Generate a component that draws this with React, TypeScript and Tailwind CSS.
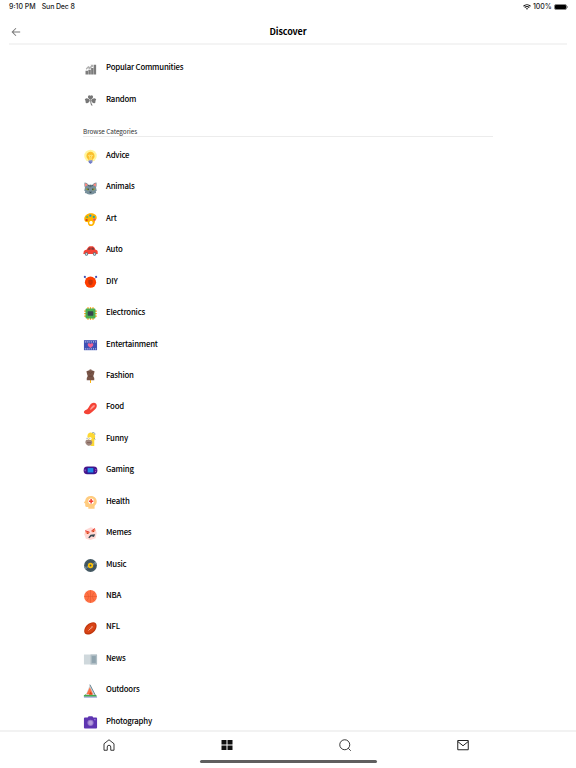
import type { ReactNode } from 'react';
import { FcIdea, FcElectronics } from 'react-icons/fc';

interface Item {
  label: string;
  icon: ReactNode;
}

function Svg({ children }: { children: ReactNode }) {
  return (
    <svg viewBox="0 0 48 48" className="w-[15px] h-[15px]" fill="none">
      {children}
    </svg>
  );
}

const shortcuts: Item[] = [
  {
    label: 'Popular Communities',
    icon: (
      <Svg>
        <g fill="#7c7c7c">
          <path d="M8 28h8v12H8zM17 25h8v15h-8zM26 19h7v21h-7zM34 9h8v31h-8z" />
          <path d="M9 21l8-8 5 3 4-5-2-2h8v8l-2-2-8 8-6-3-5 5z" opacity=".6" />
        </g>
      </Svg>
    ),
  },
  {
    label: 'Random',
    icon: (
      <Svg>
        <g fill="#777777">
          <path d="M24 22c-8-4-10-9-7-13 2-3 5-2 7 0 2-2 5-3 7 0 3 4 1 9-7 13z" />
          <path d="M22 23c-3 9-8 11-12 9-3-2-2-5-1-7-3-1-4-4-2-6 4-4 10-2 15 4z" />
          <path d="M26 23c3 9 8 11 12 9 3-2 2-5 1-7 3-1 4-4 2-6-4-4-10-2-15 4z" />
          <path d="M23 22h3c0 8 1 12 5 17l-3 2c-4-5-5-11-5-19z" />
        </g>
      </Svg>
    ),
  },
];

const categories: Item[] = [
  { label: 'Advice', icon: <FcIdea className="w-[15px] h-[15px]" /> },
  {
    label: 'Animals',
    icon: (
      <Svg>
        <path d="M5 5c6 0 11 4 13 9L7 23C4 17 4 10 5 5zM43 5c-6 0-11 4-13 9l11 9c3-6 3-13 2-18z" fill="#78909c" />
        <path d="M7 7c4 1 7 3 9 7l-8 5c-2-4-2-8-1-12zM41 7c-4 1-7 3-9 7l8 5c2-4 2-8 1-12z" fill="#ff8a80" />
        <path d="M6 22c2-7 9-10 18-10s16 3 18 10l2 9-3 2 1 5-6 2c-2 2-6 3-12 3s-10-1-12-3l-6-2 1-5-3-2z" fill="#78909c" />
        <path d="M17 12h3l1 7-5-5zM31 12h-3l-1 7 5-5zM23 12h2v8h-2z" fill="#455a64" />
        <path d="M9 24c4-1 9 1 11 5-5 2-10 0-11-5zM39 24c-4-1-9 1-11 5 5 2 10 0 11-5z" fill="#9ea82c" />
        <path d="M15 24h3v5h-3zM30 24h3v5h-3z" fill="#263238" />
        <path d="M19 34h10l-5 5z" fill="#37474f" />
      </Svg>
    ),
  },
  {
    label: 'Art',
    icon: (
      <Svg>
        <path
          d="M25 4C13 4 4 12 4 22c0 6 4 10 8 10 3 0 4 1 4 4 0 6 4 9 9 9 9 0 13-9 13-15 0-4 6-5 6-12C44 9 36 4 25 4zm1 36c-3 0-6-2-6-5.500s3-5.500 6-5.500 5 2 5 5.500-2 5.500-5 5.500z"
          fill="#ffb300"
        />
        <rect x="8" y="22" width="7" height="7" rx="3" fill="#d84315" />
        <rect x="10" y="13" width="7" height="7" rx="3" fill="#7cb342" />
        <rect x="20" y="8" width="7" height="7" rx="3" fill="#039be5" />
        <rect x="31" y="12" width="7" height="7" rx="3" fill="#26a69a" />
        <rect x="33" y="21" width="7" height="7" rx="3" fill="#ec407a" />
      </Svg>
    ),
  },
  {
    label: 'Auto',
    icon: (
      <Svg>
        <path d="M2 26c0-5 4-7 9-8l5-7c2-3 4-4 8-4h5c4 0 6 2 8 5l3 6c5 1 7 3 7 7v7H1z" fill="#f44336" />
        <path d="M18 13c1-2 3-2 6-2v7H14zM27 11c4 0 6 0 7 2l3 5H27z" fill="#7f3b3b" />
        <circle cx="11" cy="32" r="5.500" fill="#546e7a" />
        <circle cx="37" cy="32" r="5.500" fill="#546e7a" />
        <circle cx="11" cy="32" r="3" fill="#cfd8dc" />
        <circle cx="37" cy="32" r="3" fill="#cfd8dc" />
      </Svg>
    ),
  },
  {
    label: 'DIY',
    icon: (
      <Svg>
        <path d="M8 9l6 6M40 9l-6 6" stroke="#90a4ae" strokeWidth="3" />
        <circle cx="6" cy="6" r="3.500" fill="#3f51b5" />
        <circle cx="42" cy="6" r="3.500" fill="#3f51b5" />
        <circle cx="24" cy="23" r="18" fill="#ff3d00" />
        <path d="M17 17l7-3 7 3v6c0 5-3 8-7 10-4-2-7-5-7-10z" fill="#bf360c" />
        <path d="M22 20h6v7h-6z" fill="#dd2c00" />
      </Svg>
    ),
  },
  { label: 'Electronics', icon: <FcElectronics className="w-[15px] h-[15px]" /> },
  {
    label: 'Entertainment',
    icon: (
      <Svg>
        <path d="M3 7h42v32H3z" fill="#3f51b5" />
        <path
          d="M6 10h3v4H6zM12 10h3v4h-3zM18 10h3v4h-3zM25 10h3v4h-3zM32 10h3v4h-3zM39 10h3v4h-3zM6 33h3v4H6zM12 33h3v4h-3zM18 33h3v4h-3zM25 33h3v4h-3zM32 33h3v4h-3zM39 33h3v4h-3z"
          fill="#c5cae9"
        />
        <path d="M24 32c-6-4-9-7-9-11 0-5 7-6 9-2 2-4 9-3 9 2 0 4-3 7-9 11z" fill="#f06292" />
      </Svg>
    ),
  },
  {
    label: 'Fashion',
    icon: (
      <Svg>
        <path d="M22.500 33h3v12h-3z" fill="#ffb300" />
        <path d="M21 1h6v5h-6z" fill="#8d6e63" />
        <path d="M20 4h8l9 3-2 10c-3 5-2 7 1 12v7H12v-7c3-5 4-7 1-12L11 7z" fill="#795548" />
        <path d="M16 8l8 6 8-6M17 23h14" stroke="#5d4037" strokeWidth="2" />
      </Svg>
    ),
  },
  {
    label: 'Food',
    icon: (
      <Svg>
        <path d="M27 8c8-6 19-1 17 9-1 8-8 12-14 17-7 7-15 10-23 7-7-3-4-10 2-12 9-3 10-15 18-21z" fill="#f44336" />
        <path d="M31 14c5-3 9 0 7 4-2 3-6 4-8 7-4 4-6 5-8 4 2-6 4-11 9-15z" fill="#ff7a70" />
        <path d="M35 15l-10 10" stroke="#ffd5d0" strokeWidth="2" />
      </Svg>
    ),
  },
  {
    label: 'Funny',
    icon: (
      <Svg>
        <path d="M14 15C14 5 20 1 27 2c8 0 12 6 12 14l-3 13v16H24V32L13 24z" fill="#fdd835" />
        <path d="M29 3c6-4 10 1 9 6M36 20l3 4" stroke="#607d8b" strokeWidth="2.200" />
        <path d="M8 30c1-5 7-7 13-5 8 1 10 5 8 12-2 6-10 9-15 5-4-3-8-7-6-12z" fill="#a1887f" />
        <circle cx="14" cy="21" r="4.500" fill="#eceff1" />
        <circle cx="23" cy="21" r="4.500" fill="#fff" />
        <circle cx="13" cy="21" r="1.400" fill="#37474f" />
        <circle cx="22" cy="21" r="1.400" fill="#37474f" />
        <path d="M13 34h12" stroke="#6d4c41" strokeWidth="2" />
      </Svg>
    ),
  },
  {
    label: 'Gaming',
    icon: (
      <Svg>
        <path d="M14 8h20c9 0 12 5 12 13s-4 12-11 12H13C6 33 2 29 2 21S5 8 14 8z" fill="#4a148c" />
        <rect x="12" y="10" width="24" height="22" rx="2" fill="#311b92" />
        <path d="M15 13h18v14H15z" fill="#1e88e5" />
        <path d="M7 17v7M4 20h6" stroke="#9575cd" strokeWidth="1.800" />
        <circle cx="41" cy="18" r="1.800" fill="#ba68c8" />
        <circle cx="40" cy="24" r="1.800" fill="#ba68c8" />
      </Svg>
    ),
  },
  {
    label: 'Health',
    icon: (
      <Svg>
        <path d="M25 3c12 0 19 8 19 18 0 7-4 11-7 14v9H17v-6h-5c-4 0-5-2-5-6v-5l-4-2 4-7C8 9 15 3 25 3z" fill="#ffcc80" />
        <circle cx="26" cy="20" r="9" fill="#fff" />
        <path d="M23.500 13h5v4.500H33v5h-4.500V27h-5v-4.500H19v-5h4.500z" fill="#f44336" />
      </Svg>
    ),
  },
  {
    label: 'Memes',
    icon: (
      <Svg>
        <path d="M8 12L25 4l15 5 4 13-4 17-16 6-15-4-5-15z" fill="#ffd9d5" />
        <path d="M8 16l13 3-3 6-9-1zM27 15l11-6 2 7-9 5z" fill="#ff8a65" />
        <path d="M7 15l14 5M27 16l11-8" stroke="#e53935" strokeWidth="3" />
        <circle cx="15" cy="23" r="2.500" fill="#bf360c" />
        <circle cx="33" cy="17" r="2.500" fill="#bf360c" />
        <path d="M17 37l7-9 15-2-4 9-8-2-7 6z" fill="#37474f" />
      </Svg>
    ),
  },
  {
    label: 'Music',
    icon: (
      <Svg>
        <circle cx="24" cy="24" r="20.500" fill="#455a64" />
        <path d="M24 24L8 37A20 20 0 0 1 4 29zM24 24L40 11a20 20 0 0 1 4 8z" fill="#78909c" />
        <circle cx="24" cy="24" r="14" stroke="#37474f" strokeWidth="1.500" />
        <circle cx="24" cy="24" r="8.500" fill="#ffc107" />
        <circle cx="24" cy="24" r="3" fill="#455a64" />
      </Svg>
    ),
  },
  {
    label: 'NBA',
    icon: (
      <Svg>
        <circle cx="24" cy="24" r="20.500" fill="#ff7043" />
        <path
          d="M24 4v40M4 24h40M10 9c10 8 10 22 0 30M38 9c-10 8-10 22 0 30"
          stroke="#e2582f"
          strokeWidth="1.800"
        />
      </Svg>
    ),
  },
  {
    label: 'NFL',
    icon: (
      <Svg>
        <path d="M40 6c6 6 4 19-5 28S13 46 7 41 4 22 13 13 35 2 40 6z" fill="#bf360c" />
        <path d="M38 9c4 5 2 15-5 22S14 41 9 37 8 23 15 16 33 5 38 9z" fill="#d84315" />
        <path d="M17 31l14-14M19 25l4 4M23 21l4 4M27 17l4 4" stroke="#ffccbc" strokeWidth="1.800" />
      </Svg>
    ),
  },
  {
    label: 'News',
    icon: (
      <Svg>
        <path d="M3 8h42v32H3z" fill="#cfd8dc" />
        <path d="M24 8h21v32H24z" fill="#b0bec5" />
        <path d="M28 13h13v22H28z" fill="#90a4ae" />
      </Svg>
    ),
  },
  {
    label: 'Outdoors',
    icon: (
      <Svg>
        <path d="M3 36l9-5 12 2 18 2v6H3z" fill="#43a047" />
        <path d="M22 2L9 35h29z" fill="#cfd8dc" />
        <path d="M22 2l17 33" stroke="#607d8b" strokeWidth="3" />
        <path d="M22 10l10 23H11z" fill="#ff7043" />
        <path d="M24 24l7 10H19z" fill="#d84315" />
        <path d="M3 35l12 2 10-1 19 1v4H3z" fill="#4caf50" />
        <path d="M3 40h42v4H3z" fill="#9fa8da" />
      </Svg>
    ),
  },
  {
    label: 'Photography',
    icon: (
      <Svg>
        <path d="M15 8l3-4h12l3 4h9c2 0 3 1 3 3v29c0 2-1 3-3 3H6c-2 0-3-1-3-3V11c0-2 1-3 3-3z" fill="#5e35b1" />
        <circle cx="24" cy="25" r="10" fill="#9575cd" />
        <circle cx="24" cy="25" r="7" fill="#b39ddb" />
        <circle cx="38" cy="15" r="2" fill="#b388ff" />
      </Svg>
    ),
  },
];

function Row({ label, icon }: Item) {
  return (
    <li className="flex h-[31.45px] shrink-0 items-center">
      <span className="flex w-[15px] justify-center pt-[3px]">{icon}</span>
      <span className="ml-[8px] pb-[0.6px] text-[7.8px] font-medium leading-[12px] tracking-[-0.2px] text-black">
        {label}
      </span>
    </li>
  );
}

function StatusBar() {
  return (
    <div className="flex h-[14px] shrink-0 items-center px-[9px] font-['Inter',sans-serif] text-[7px] font-medium text-[#222222]">
      <span>9:10 PM</span>
      <span className="ml-[6px] tracking-[-0.15px]">Sun Dec 8</span>
      <svg viewBox="0 0 16 12" className="ml-auto h-[6px] w-[8px]" fill="none" stroke="#111111" strokeWidth="2.2">
        <path d="M1 4.500c4-4 10-4 14 0M3.500 7.200c2.600-2.600 6.400-2.600 9 0" />
        <path d="M5.800 9L8 11.500 10.200 9C9 8 7 8 5.800 9z" fill="#111111" stroke="none" />
      </svg>
      <span className="ml-[2px] tracking-[-0.1px]">100%</span>
      <span className="ml-[2px] h-[6px] w-[13px] rounded-[2px] border-[0.5px] border-[#888888] bg-black" />
      <span className="-mr-px ml-[0.5px] h-[2px] w-px rounded-r bg-[#888888]" />
    </div>
  );
}

function TabBar() {
  return (
    <nav className="grid h-[30px] shrink-0 grid-cols-4 place-items-center border-t-2 border-[#f2f2f2] pb-[2px] pl-[50px] pr-[54px] text-[#222222]">
      <svg viewBox="0 0 24 24" className="h-[12px] w-[12px]" fill="none" stroke="currentColor" strokeWidth="1.800">
        <path d="M2 9.500L12 1.500l10 8V22.500h-6.500V16a3.500 3.500 0 0 0-7 0v6.500H2z" strokeLinejoin="round" />
      </svg>
      <svg viewBox="0 0 24 24" className="h-[12px] w-[12px]" fill="#111111">
        <path d="M1 2h10v9H1zM13 2h10v9H13zM1 13h10v9H1zM13 13h10v9H13z" />
      </svg>
      <svg viewBox="0 0 24 24" className="h-[12px] w-[12px]" fill="none" stroke="currentColor" strokeWidth="1.800">
        <circle cx="11.500" cy="11.500" r="10" />
        <path d="M18.500 18.500l5 5" />
      </svg>
      <svg viewBox="0 0 24 24" className="h-[12px] w-[12px]" fill="none" stroke="currentColor" strokeWidth="2">
        <path d="M1.500 3h21v18.500h-21zM1.500 5L12 13.500 22.500 5" />
      </svg>
    </nav>
  );
}

export default function App() {
  return (
    <div className="flex h-screen flex-col overflow-hidden bg-white font-['Noto_Sans_CJK_JP',sans-serif]">
      <StatusBar />

      {/* Header */}
      <header className="mx-[9px] grid h-[31px] shrink-0 grid-cols-3 items-center border-b-2 border-[#f4f4f4] pt-[7px]">
        <svg viewBox="0 0 24 24" className="ml-[2px] h-[10px] w-[10px]" fill="none" stroke="#777777" strokeWidth="2.5">
          <path d="M22 12H3M12 3L3 12l9 9" />
        </svg>
        <h1 className="text-center text-[9px] font-bold leading-[12px] tracking-[-0.1px] text-black">Discover</h1>
      </header>

      <main className="min-h-0 flex-1 overflow-hidden pl-[83px] pr-[83px] pt-[7px]">
        <ul>
          {shortcuts.map(item => (
            <Row key={item.label} {...item} />
          ))}
        </ul>
        <h2 className="mt-[12px] h-[10px] border-b border-[#ececec] text-[6.4px] leading-[9px] tracking-[-0.05px] text-[#333333]">
          Browse Categories
        </h2>
        <ul className="pt-[2.6px]">
          {categories.map(item => (
            <Row key={item.label} {...item} />
          ))}
        </ul>
      </main>

      <TabBar />
      {/* Home indicator */}
      <div className="flex h-[8px] shrink-0 justify-center">
        <div className="h-[3px] w-[177px] rounded-full bg-[#5f5f5f]" />
      </div>
    </div>
  );
}
